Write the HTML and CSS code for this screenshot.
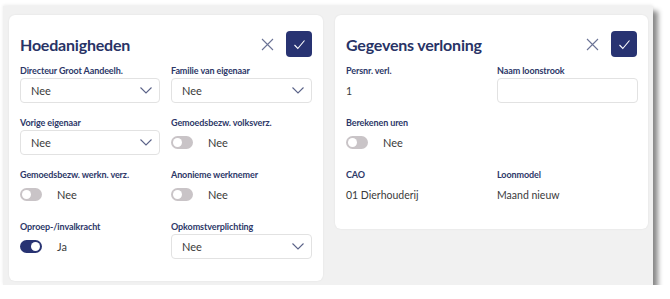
FILE: index.html
```html
<!DOCTYPE html>
<html>
<head>
<meta charset="utf-8">
<link rel="stylesheet" href="styles.css">
</head>
<body>
<div class="window">
  <section class="card card-a">
    <header class="card-head">
      <h2 class="title">Hoedanigheden</h2>
      <div class="actions">
        <button class="btn-close" aria-label="Sluiten">
          <svg width="13" height="13" viewBox="0 0 13 13"><path d="M1 1L12 12M12 1L1 12" stroke="#6b7396" stroke-width="1.1" fill="none"/></svg>
        </button>
        <button class="btn-ok" aria-label="Opslaan">
          <svg width="13" height="11" viewBox="0 0 13 11"><path d="M1.5 6L4.8 9.5L11.5 1.5" stroke="#fff" stroke-width="1.1" fill="none"/></svg>
        </button>
      </div>
    </header>
    <div class="grid">
      <div class="field">
        <label class="lbl">Directeur Groot Aandeelh.</label>
        <div class="select"><span>Nee</span><svg class="chev" width="12" height="7" viewBox="0 0 12 7"><path d="M0.5 0.5L6 6L11.5 0.5" stroke="#5a6288" stroke-width="1.1" fill="none"/></svg></div>
      </div>
      <div class="field">
        <label class="lbl">Familie van eigenaar</label>
        <div class="select"><span>Nee</span><svg class="chev" width="12" height="7" viewBox="0 0 12 7"><path d="M0.5 0.5L6 6L11.5 0.5" stroke="#5a6288" stroke-width="1.1" fill="none"/></svg></div>
      </div>
      <div class="field">
        <label class="lbl">Vorige eigenaar</label>
        <div class="select"><span>Nee</span><svg class="chev" width="12" height="7" viewBox="0 0 12 7"><path d="M0.5 0.5L6 6L11.5 0.5" stroke="#5a6288" stroke-width="1.1" fill="none"/></svg></div>
      </div>
      <div class="field">
        <label class="lbl">Gemoedsbezw. volksverz.</label>
        <div class="toggle-row"><span class="toggle"></span><span class="val">Nee</span></div>
      </div>
      <div class="field">
        <label class="lbl">Gemoedsbezw. werkn. verz.</label>
        <div class="toggle-row"><span class="toggle"></span><span class="val">Nee</span></div>
      </div>
      <div class="field">
        <label class="lbl">Anonieme werknemer</label>
        <div class="toggle-row"><span class="toggle"></span><span class="val">Nee</span></div>
      </div>
      <div class="field">
        <label class="lbl">Oproep-/invalkracht</label>
        <div class="toggle-row"><span class="toggle on"></span><span class="val">Ja</span></div>
      </div>
      <div class="field">
        <label class="lbl">Opkomstverplichting</label>
        <div class="select"><span>Nee</span><svg class="chev" width="12" height="7" viewBox="0 0 12 7"><path d="M0.5 0.5L6 6L11.5 0.5" stroke="#5a6288" stroke-width="1.1" fill="none"/></svg></div>
      </div>
    </div>
  </section>
  <section class="card card-b">
    <header class="card-head">
      <h2 class="title">Gegevens verloning</h2>
      <div class="actions">
        <button class="btn-close" aria-label="Sluiten">
          <svg width="13" height="13" viewBox="0 0 13 13"><path d="M1 1L12 12M12 1L1 12" stroke="#6b7396" stroke-width="1.1" fill="none"/></svg>
        </button>
        <button class="btn-ok" aria-label="Opslaan">
          <svg width="13" height="11" viewBox="0 0 13 11"><path d="M1.5 6L4.8 9.5L11.5 1.5" stroke="#fff" stroke-width="1.1" fill="none"/></svg>
        </button>
      </div>
    </header>
    <div class="grid">
      <div class="field">
        <label class="lbl">Persnr. verl.</label>
        <div class="plain">1</div>
      </div>
      <div class="field">
        <label class="lbl">Naam loonstrook</label>
        <div class="input"></div>
      </div>
      <div class="field">
        <label class="lbl">Berekenen uren</label>
        <div class="toggle-row"><span class="toggle"></span><span class="val">Nee</span></div>
      </div>
      <div class="field"></div>
      <div class="field">
        <label class="lbl">CAO</label>
        <div class="plain">01 Dierhouderij</div>
      </div>
      <div class="field">
        <label class="lbl">Loonmodel</label>
        <div class="plain">Maand nieuw</div>
      </div>
    </div>
  </section>
</div>
</body>
</html>
```
FILE: styles.css
```css
* { box-sizing: border-box; }
html, body { margin: 0; padding: 0; background: #fff; }
body {
  font-family: Lato, "Open Sans", sans-serif;
  color: #3b3b3b;
}
.window {
  margin: 6px 0 0 3px;
  width: 650px;
  height: 279px;
  background: #f1f1f1;
  box-shadow: 0 -1px 3px rgba(0,0,0,0.08), 5px 5px 5px rgba(0,0,0,0.45);
  display: flex;
  align-items: flex-start;
  gap: 12px;
  padding: 9px 0 0 6px;
}
.card {
  background: #fff;
  border-radius: 6px;
  box-shadow: 0 0 2px rgba(0,0,0,0.08);
  padding: 16px 11px 0 11px;
}
.card-a { width: 314px; height: 266px; }
.card-b { width: 313px; height: 214px; }
.card-head {
  display: flex;
  align-items: center;
  justify-content: space-between;
  height: 26px;
  margin-bottom: 7px;
}
.title {
  margin: 0;
  font-size: 16px;
  font-weight: 700;
  color: #283366;
  letter-spacing: -0.2px;
}
.actions { display: flex; align-items: center; gap: 12px; }
.btn-close {
  border: 0; background: none; padding: 0; width: 13px; height: 13px;
  display: flex;
}
.btn-ok {
  border: 0; padding: 0;
  width: 26px; height: 26px;
  border-radius: 4px;
  background: #283372;
  display: flex; align-items: center; justify-content: center;
}
.grid {
  display: grid;
  grid-template-columns: 140px 141px;
  column-gap: 11px;
  row-gap: 13px;
}
.field { display: flex; flex-direction: column; }
.lbl {
  font-size: 9px;
  font-weight: 700;
  color: #2d3868;
  height: 13px;
  line-height: 13px;
  margin-bottom: 1px;
  letter-spacing: -0.1px;
  white-space: nowrap;
}
.select, .input {
  height: 25px;
  border: 1px solid #e2e2e2;
  border-radius: 4px;
  display: flex;
  align-items: center;
  justify-content: space-between;
  padding: 0 7px 0 10px;
  font-size: 11px;
  color: #3b3b3b;
  background: #fff;
}
.chev { display: block; }
.toggle-row {
  height: 25px;
  display: flex;
  align-items: center;
  font-size: 11px;
}
.toggle {
  width: 22px; height: 13px;
  border-radius: 7px;
  background: #c9c4c7;
  position: relative;
  margin-right: 15px;
}
.toggle::after {
  content: "";
  position: absolute;
  top: 2px; left: 2px;
  width: 9px; height: 9px;
  border-radius: 50%;
  background: #fff;
}
.toggle.on { background: #283372; }
.toggle.on::after { left: 11px; }
.val { color: #3b3b3b; }
.plain {
  height: 25px;
  display: flex;
  align-items: center;
  font-size: 10.5px;
  color: #3b3b3b;
}
```
